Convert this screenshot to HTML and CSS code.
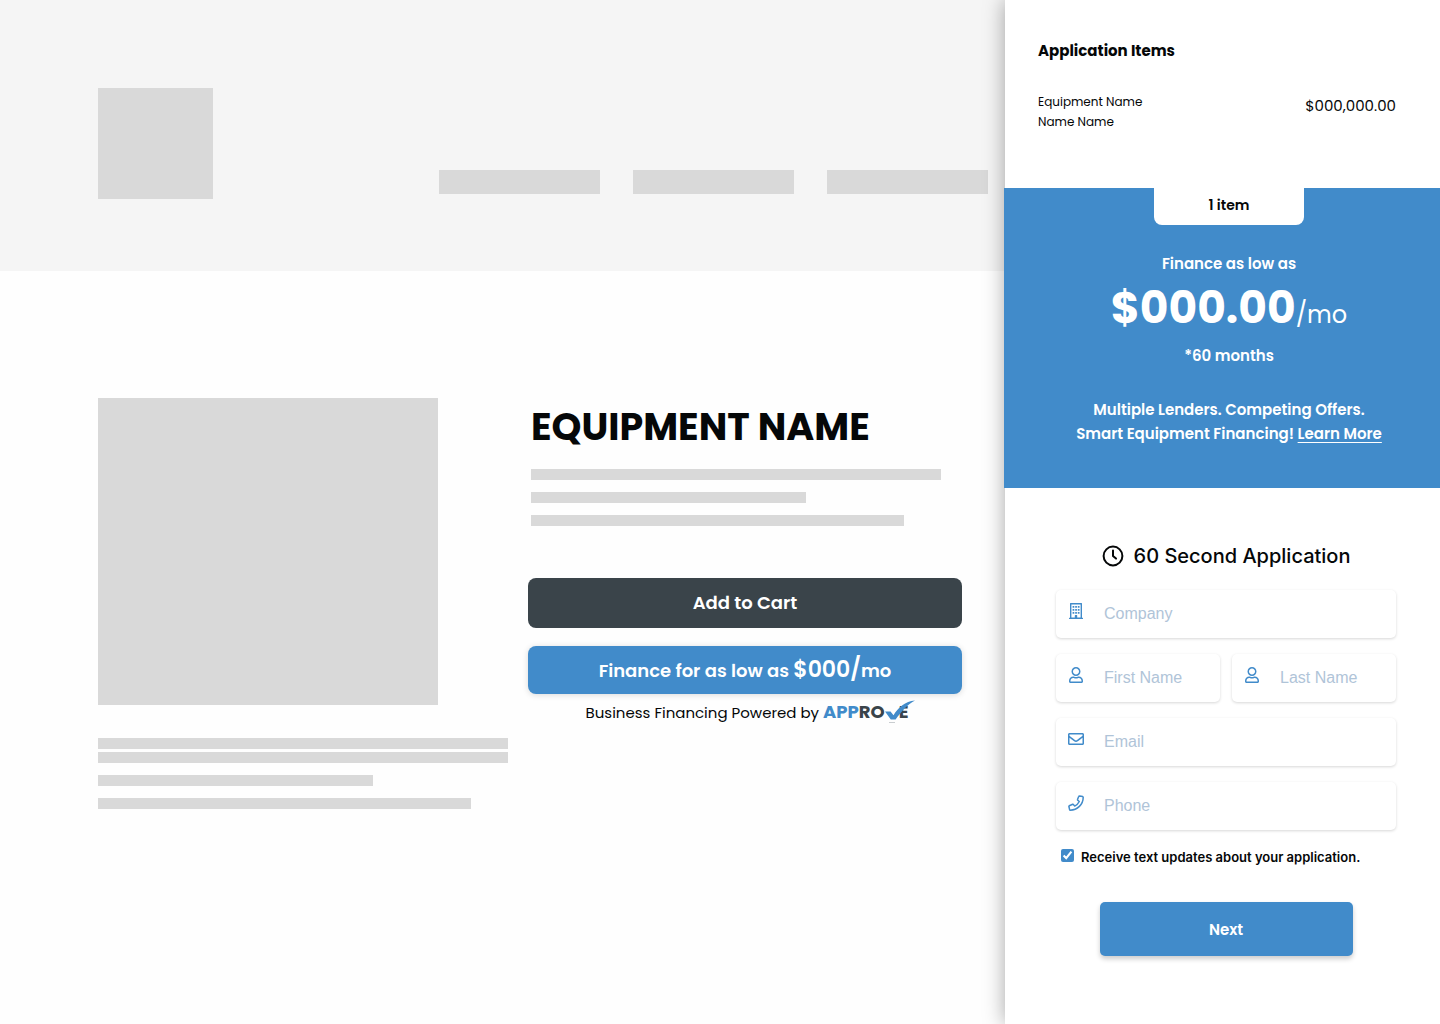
FILE: index.html
```html
<!DOCTYPE html>
<html lang="en">
<head>
<meta charset="utf-8">
<meta name="viewport" content="width=device-width, initial-scale=1">
<title>Equipment Name</title>
<link rel="stylesheet" href="styles.css">
</head>
<body>
<div class="layout">
  <div class="store">
    <header class="store-header">
      <div class="block store-logo"></div>
      <div class="store-nav">
        <div class="block nav-item"></div>
        <div class="block nav-item"></div>
        <div class="block nav-item"></div>
      </div>
    </header>
    <main class="product">
      <section class="gallery">
        <div class="block photo"></div>
        <div class="bars gallery-bars">
          <div class="block bar bar-double"></div>
          <div class="block bar"></div>
          <div class="block bar bar-short"></div>
          <div class="block bar bar-medium"></div>
        </div>
      </section>
      <section class="details">
        <h1 class="product-name">EQUIPMENT NAME</h1>
        <div class="bars detail-bars">
          <div class="block bar"></div>
          <div class="block bar bar-short"></div>
          <div class="block bar bar-medium"></div>
        </div>
        <button class="btn btn-cart" type="button">Add to Cart</button>
        <button class="btn btn-finance" type="button">Finance for as low as <span class="btn-price">$000/</span>mo</button>
        <p class="powered">Business Financing Powered by
          <span class="brand"><span class="brand-blue">APP</span>RO<svg class="brand-check" viewBox="0 0 30 24" aria-label="V" role="img"><path fill="#418bca" d="M0 11.500h5.500l3 3.800C13.500 7.500 20 1.500 30 .6 23 4 17 11 10.600 19.600H5.800z"/><path fill="#c9cdd0" d="M4 22h6v1H4z"/></svg>E</span>
        </p>
      </section>
    </main>
  </div>

  <aside class="panel">
    <section class="items">
      <h2 class="items-title">Application Items</h2>
      <div class="item">
        <span class="item-name">Equipment Name<br>Name Name</span>
        <span class="item-price">$000,000.00</span>
      </div>
    </section>

    <section class="offer">
      <div class="item-count">1 item</div>
      <p class="offer-text">Finance as low as</p>
      <p class="offer-price"><strong>$000.00</strong>/mo</p>
      <p class="offer-text">*60 months</p>
      <p class="offer-text offer-pitch">Multiple Lenders. Competing Offers.<br>Smart Equipment Financing! <a href="#">Learn More</a></p>
    </section>

    <form class="apply">
      <h2 class="apply-title">
        <svg class="clock" viewBox="0 0 22 22" fill="none" stroke="currentColor" stroke-width="2" stroke-linecap="round" stroke-linejoin="round"><circle cx="11" cy="11" r="9.400"/><path d="M11 5.500V11l3 2.600"/></svg>
        60 Second Application
      </h2>
      <div class="fields">
        <label class="field field-wide">
          <svg class="field-icon" viewBox="0 0 16 16" fill="currentColor"><path fill-rule="evenodd" d="M2 .5Q2 0 2.500 0h11q.5 0 .5.5V14.700h.6q.4 0 .4.4V16H1v-.9q0-.4.4-.4H2zM3.400 1.400v13.200h3.400V12.500q0-.5.5-.5h1.400q.5 0 .5.5v2.100h3.400V1.400z"/><path d="M4.600 3h1.700v1.700H4.600zM7.200 3h1.700v1.700H7.200zM9.800 3h1.700v1.700H9.800zM4.600 6h1.700v1.700H4.600zM7.200 6h1.700v1.700H7.200zM9.800 6h1.700v1.700H9.800zM4.600 9h1.700v1.700H4.600zM7.200 9h1.700v1.700H7.200zM9.800 9h1.700v1.700H9.800z"/></svg>
          <input class="field-input" type="text" placeholder="Company" aria-label="Company">
        </label>
        <label class="field">
          <svg class="field-icon" viewBox="-32 0 512 512" fill="currentColor"><path d="M313.600 304c-28.700 0-42.500 16-89.600 16-47.100 0-60.800-16-89.600-16C60.200 304 0 364.200 0 438.400V464c0 26.500 21.500 48 48 48h352c26.500 0 48-21.500 48-48v-25.600c0-74.200-60.200-134.400-134.400-134.400zM400 464H48v-25.600c0-47.600 38.800-86.400 86.400-86.400 14.600 0 38.300 16 89.600 16 51.700 0 74.900-16 89.600-16 47.600 0 86.400 38.800 86.400 86.400V464zM224 288c79.500 0 144-64.500 144-144S303.500 0 224 0 80 64.500 80 144s64.500 144 144 144zm0-240c52.900 0 96 43.100 96 96s-43.100 96-96 96-96-43.100-96-96 43.100-96 96-96z"/></svg>
          <input class="field-input" type="text" placeholder="First Name" aria-label="First Name">
        </label>
        <label class="field">
          <svg class="field-icon" viewBox="-32 0 512 512" fill="currentColor"><path d="M313.600 304c-28.700 0-42.500 16-89.600 16-47.100 0-60.800-16-89.600-16C60.200 304 0 364.200 0 438.400V464c0 26.500 21.500 48 48 48h352c26.500 0 48-21.500 48-48v-25.600c0-74.200-60.200-134.400-134.400-134.400zM400 464H48v-25.600c0-47.600 38.800-86.400 86.400-86.400 14.600 0 38.300 16 89.600 16 51.700 0 74.900-16 89.600-16 47.600 0 86.400 38.800 86.400 86.400V464zM224 288c79.500 0 144-64.500 144-144S303.500 0 224 0 80 64.500 80 144s64.500 144 144 144zm0-240c52.900 0 96 43.100 96 96s-43.100 96-96 96-96-43.100-96-96 43.100-96 96-96z"/></svg>
          <input class="field-input" type="text" placeholder="Last Name" aria-label="Last Name">
        </label>
        <label class="field field-wide">
          <svg class="field-icon" viewBox="0 0 512 512" fill="currentColor"><path d="M464 64H48C21.490 64 0 85.490 0 112v288c0 26.510 21.490 48 48 48h416c26.510 0 48-21.490 48-48V112c0-26.510-21.490-48-48-48zm0 48v40.805c-22.422 18.259-58.168 46.651-134.587 106.490-16.841 13.247-50.201 45.072-73.413 44.701-23.208.375-56.579-31.459-73.413-44.701C106.180 199.465 70.425 171.067 48 152.805V112h416zM48 400V214.398c22.914 18.251 55.409 43.862 104.938 82.646 21.857 17.205 60.134 55.186 103.062 54.955 42.717.231 80.509-37.199 103.053-54.947 49.528-38.783 82.032-64.401 104.947-82.653V400H48z"/></svg>
          <input class="field-input" type="email" placeholder="Email" aria-label="Email">
        </label>
        <label class="field field-wide">
          <svg class="field-icon" viewBox="0 0 16 16" fill="none" stroke="currentColor" stroke-width="1.500" stroke-linejoin="round"><path d="M11.500.9l3.200.7c.3.1.5.3.5.6 0 7.200-5.800 13-13 13-.3 0-.5-.2-.6-.5l-.7-3.200c-.1-.3.1-.6.4-.7l3.400-1.500c.3-.1.6 0 .7.2l1.300 1.600c2-1 3.600-2.600 4.600-4.600l-1.600-1.300c-.2-.2-.3-.5-.2-.7L10.800 1.300c.1-.3.4-.4.7-.4z"/></svg>
          <input class="field-input" type="tel" placeholder="Phone" aria-label="Phone">
        </label>
      </div>
      <label class="consent">
        <input class="consent-box" type="checkbox" checked>
        Receive text updates about your application.
      </label>
      <button class="btn-next" type="submit">Next</button>
    </form>
  </aside>
</div>
</body>
</html>
```

FILE: styles.css
```css
:root {
  --blue: #418bca;
  --slate: #3a444a;
  --grey: #d9d9d9;
  --ink: #050708;
  --display: Poppins, Inter, sans-serif;
}

* {
  box-sizing: border-box;
}

body {
  margin: 0;
  background: #fefefe;
  color: var(--ink);
  font-family: var(--display);
  font-size: 15px;
  line-height: 24px;
}

h1, h2, p {
  margin: 0;
}

button {
  border: 0;
  font-family: inherit;
  color: #fff;
  cursor: pointer;
}

.layout {
  display: grid;
  grid-template-columns: minmax(0, 1fr) 435px;
  min-height: 100vh;
}

.block {
  background: var(--grey);
}

/* Store page */

.store-header {
  display: flex;
  justify-content: space-between;
  align-items: flex-start;
  padding: 88px 17px 72px 98px;
  background: #f5f5f5;
}

.store-logo {
  width: 115px;
  height: 111px;
}

.store-nav {
  display: flex;
  gap: 33px;
  padding-top: 82px;
}

.nav-item {
  width: 161px;
  height: 24px;
}

.product {
  display: grid;
  grid-template-columns: 410fr 434fr;
  gap: 20px;
  padding: 127px 43px 40px 98px;
}

.photo {
  width: 83%;
  height: 307px;
}

.bars {
  display: flex;
  flex-direction: column;
  gap: 12px;
}

.gallery-bars {
  padding-top: 33px;
}

.bar {
  height: 11px;
}

.bar-double {
  margin-bottom: -9px;
}

.bar-short {
  width: 67%;
}

.bar-medium {
  width: 91%;
}

.product-name {
  padding: 5px 0 0 3px;
  font-size: 38px;
  line-height: 48px;
  font-weight: 700;
}

.detail-bars {
  padding: 18px 21px 52px 3px;
}

.btn {
  display: block;
  width: 100%;
  border-radius: 8px;
  font-size: 18px;
  line-height: 24px;
  font-weight: 600;
}

.btn-cart {
  height: 50px;
  margin-bottom: 18px;
  background: var(--slate);
}

.btn-finance {
  height: 48px;
  background: var(--blue);
  box-shadow: 0 1px 6px rgba(0, 0, 0, 0.15);
}

.btn-price {
  font-size: 22px;
}

.powered {
  padding: 6px 0 0 4px;
  text-align: center;
}

.brand {
  color: var(--slate);
  font-size: 18px;
  font-weight: 700;
}

.brand-blue {
  color: var(--blue);
}

.brand-check {
  position: relative;
  width: 30px;
  height: 24px;
  margin: 0 -16px -6px 0;
}

/* Application panel */

.panel {
  background: #fff;
  box-shadow: 0 0 20px rgba(0, 0, 0, 0.35);
}

.items {
  padding: 39px 44px 56px 33px;
}

.items-title {
  margin-bottom: 29px;
  font-size: 15px;
  font-weight: 700;
}

.item {
  display: flex;
  justify-content: space-between;
}

.item-name {
  font-size: 12px;
  line-height: 20px;
}

.item-price {
  line-height: 28px;
}

.offer {
  display: flex;
  flex-direction: column;
  align-items: center;
  margin-left: -1px;
  padding: 0 0 42px 14px;
  background: var(--blue);
  color: #fff;
  text-align: center;
}

.item-count {
  width: 150px;
  height: 37px;
  margin-bottom: 27px;
  border-radius: 0 0 8px 8px;
  background: #fff;
  color: var(--ink);
  font-size: 14px;
  line-height: 34px;
  font-weight: 600;
}

.offer-text {
  font-weight: 600;
}

.offer-price {
  display: flex;
  align-items: baseline;
  padding-bottom: 4px;
  font-size: 24px;
}

.offer-price strong {
  font-size: 44px;
  line-height: 64px;
  font-weight: 700;
}

.offer-pitch {
  padding-top: 30px;
}

.offer-pitch a {
  color: inherit;
  text-underline-offset: 3px;
}

.apply {
  padding: 54px 44px 40px 51px;
  font-family: Inter, sans-serif;
}

.apply-title {
  display: flex;
  justify-content: center;
  align-items: center;
  gap: 10px;
  margin-bottom: 20px;
  font-size: 20px;
  line-height: 28px;
  font-weight: 500;
}

.clock {
  width: 22px;
  height: 22px;
}

.fields {
  display: grid;
  grid-template-columns: repeat(2, minmax(0, 1fr));
  gap: 16px 12px;
}

.field {
  display: flex;
  align-items: center;
  gap: 20px;
  height: 48px;
  padding: 0 12px;
  border-radius: 5px;
  background: #fff;
  box-shadow: 0 1px 3px rgba(0, 0, 0, 0.16);
}

.field-wide {
  grid-column: 1 / -1;
}

.field-icon {
  flex: none;
  width: 16px;
  height: 16px;
  margin-bottom: 6px;
  color: var(--blue);
}

.field-input {
  flex: 1;
  min-width: 0;
  padding: 0;
  border: 0;
  outline: 0;
  background: none;
  font-family: "Liberation Sans", Arial, sans-serif;
  font-size: 16px;
}

.field-input::placeholder {
  color: #b0c4d8;
}

.consent {
  display: flex;
  align-items: center;
  gap: 7px;
  padding: 15px 0 0 5px;
  font-size: 13px;
  font-weight: 600;
}

.consent-box {
  width: 13px;
  height: 13px;
  margin: 0 0 3px;
  accent-color: var(--blue);
}

.btn-next {
  display: block;
  width: 253px;
  height: 54px;
  margin: 33px auto 0;
  border-radius: 5px;
  background: var(--blue);
  box-shadow: 0 3px 5px rgba(0, 0, 0, 0.2);
  font-family: var(--display);
  font-size: 15px;
  font-weight: 600;
}
```
